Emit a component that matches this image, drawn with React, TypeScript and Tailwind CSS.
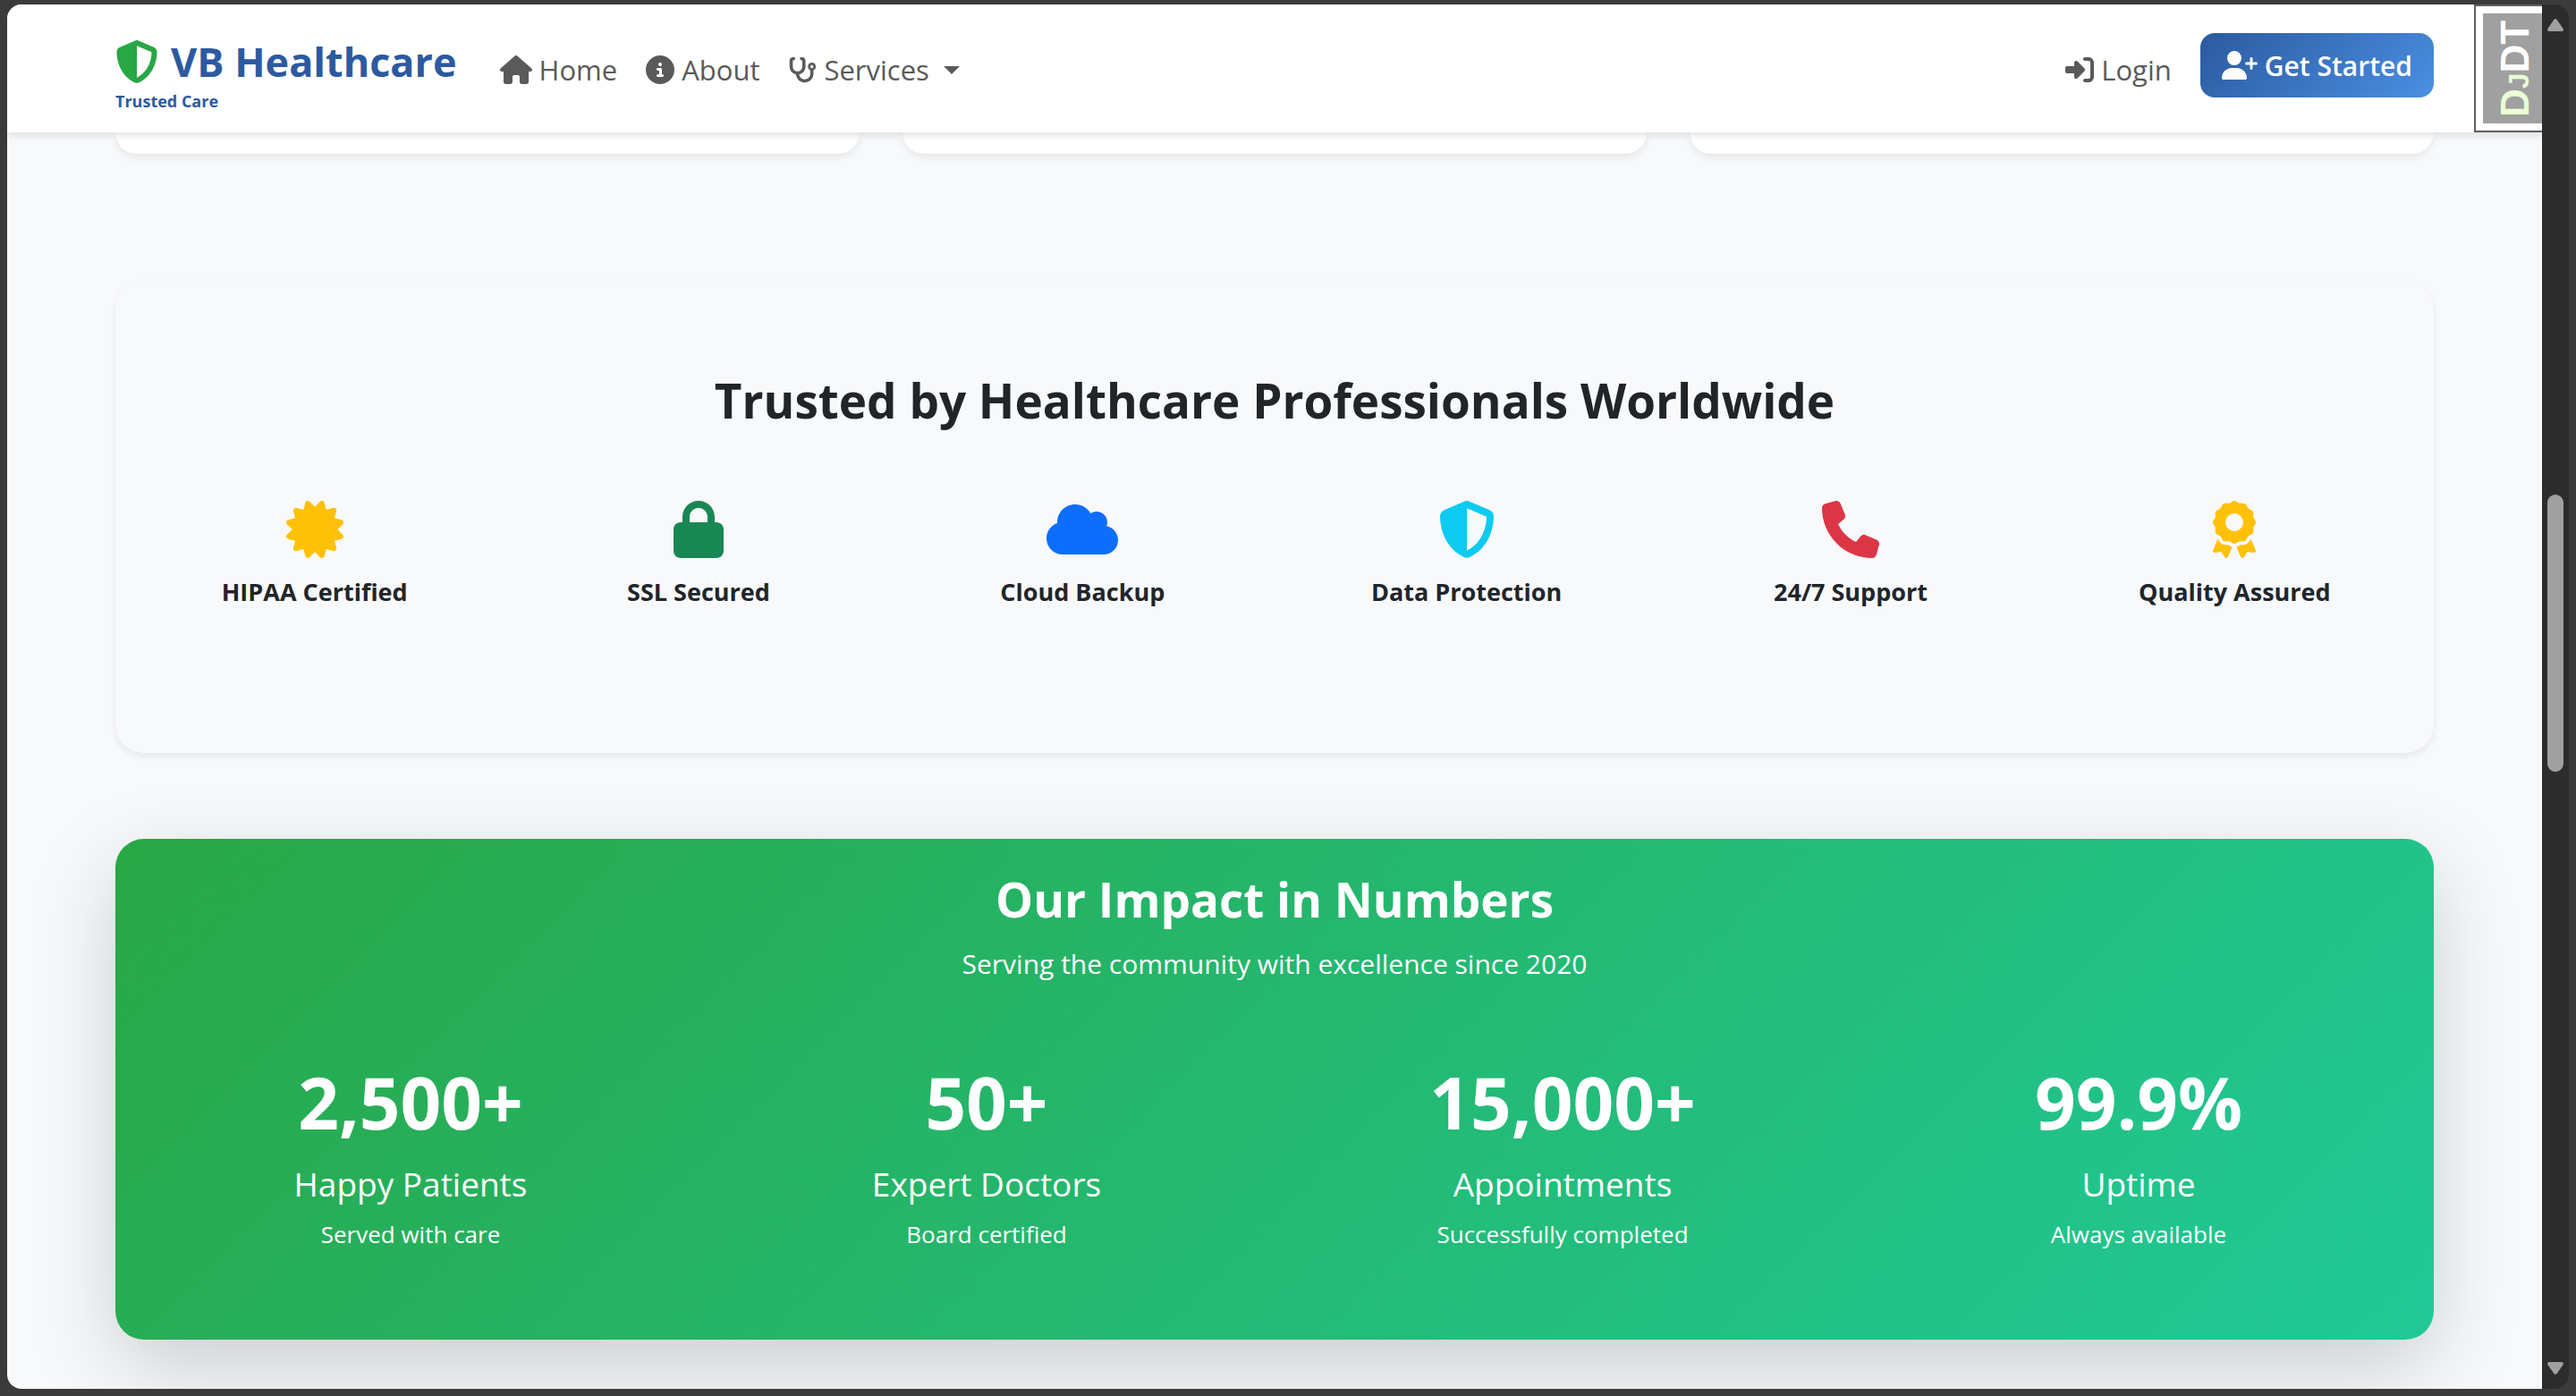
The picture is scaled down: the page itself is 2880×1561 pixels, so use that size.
import type { ComponentType, ReactNode } from "react";
import {
  FaAward,
  FaCertificate,
  FaCircleInfo,
  FaCloud,
  FaHouse,
  FaLock,
  FaPhone,
  FaRightToBracket,
  FaShieldHalved,
  FaStethoscope,
  FaUserPlus,
} from "react-icons/fa6";

type Icon = ComponentType<{ className?: string }>;

const badges: { icon: Icon; label: string; style: string }[] = [
  { icon: FaCertificate, label: "HIPAA Certified", style: "w-16 text-[#ffc107]" },
  { icon: FaLock, label: "SSL Secured", style: "w-14 text-[#198754]" },
  { icon: FaCloud, label: "Cloud Backup", style: "w-20 text-[#0d6efd]" },
  { icon: FaShieldHalved, label: "Data Protection", style: "w-16 text-[#0dcaf0]" },
  { icon: FaPhone, label: "24/7 Support", style: "w-16 text-[#dc3545]" },
  { icon: FaAward, label: "Quality Assured", style: "w-16 text-[#ffc107]" },
];

const stats = [
  { value: "2,500+", label: "Happy Patients", note: "Served with care" },
  { value: "50+", label: "Expert Doctors", note: "Board certified" },
  { value: "15,000+", label: "Appointments", note: "Successfully completed" },
  { value: "99.9%", label: "Uptime", note: "Always available" },
];

function NavLink({
  icon: IconShape,
  iconWidth = "w-8",
  children,
}: {
  icon: Icon;
  iconWidth?: string;
  children: ReactNode;
}) {
  return (
    <a href="#" className="flex items-center gap-2 text-[31px] leading-12 text-[#5a5a5a]">
      <IconShape className={`h-8 ${iconWidth}`} />
      {children}
    </a>
  );
}

function Header() {
  return (
    <header className="relative z-10 flex h-[143px] shrink-0 bg-white px-[121px] shadow-[0_4px_8px_rgba(0,0,0,0.1)]">
      <div className="flex flex-1 items-start">
        <a href="#" className="flex flex-col pt-8 font-bold text-[#2c5aa0]">
          <span className="flex items-center gap-3.5 text-[45px] leading-16">
            <FaShieldHalved className="h-12 w-12 text-[#28a745]" />
            VB Healthcare
          </span>
          <span className="text-[18px] leading-6">Trusted Care</span>
        </a>
        <nav className="ml-12 flex gap-8 pt-[49px]">
          <NavLink icon={FaHouse} iconWidth="w-9">
            Home
          </NavLink>
          <NavLink icon={FaCircleInfo}>About</NavLink>
          <button type="button" className="flex items-center gap-2 text-[31px] leading-12 text-[#5a5a5a]">
            <FaStethoscope className="h-8 w-8" />
            Services
            <svg viewBox="0 0 18 9" className="ml-2 w-[18px]" fill="currentColor">
              <path d="M0 0h18l-9 9z" />
            </svg>
          </button>
        </nav>
        <div className="ml-auto flex gap-8">
          <div className="pt-[49px]">
            <NavLink icon={FaRightToBracket}>Login</NavLink>
          </div>
          <button
            type="button"
            className="mt-8 flex h-18 items-center gap-2 rounded-2xl bg-linear-135 from-[#2c5aa0] to-[#4a90e2] px-6 text-[30px] font-semibold text-white"
          >
            <FaUserPlus className="h-8 w-10" />
            Get Started
          </button>
        </div>
      </div>
      <button
        type="button"
        aria-label="Show toolbar"
        className="absolute top-0 right-0 h-[143px] w-[76px] border-2 border-r-0 border-[#5f5f5f] bg-white py-2 pl-2"
      >
        <span className="flex h-full w-full items-center justify-center bg-[#a0a0a0] pl-1.5">
          <span className="shrink-0 -rotate-90 font-['Liberation_Sans',sans-serif] text-[44px] leading-none font-bold whitespace-nowrap text-white">
            <span className="text-[#eaffd5]">
              D<span className="text-[32px]">J</span>
            </span>
            DT
          </span>
        </span>
      </button>
    </header>
  );
}

function TrustSection() {
  return (
    <section className="mt-[142px] rounded-[32px] bg-[#f8f9fb] px-2 pt-[100px] pb-[158px] shadow-[0_4px_8px_rgba(0,0,0,0.075)]">
      <h2 className="text-center text-[53px] leading-[68px] font-bold text-[#212529]">
        Trusted by Healthcare Professionals Worldwide
      </h2>
      <ul className="mt-[78px] grid grid-cols-6">
        {badges.map(({ icon: IconShape, label, style }) => (
          <li key={label} className="flex flex-col items-center gap-4">
            <IconShape className={`h-16 ${style}`} />
            <span className="text-[27px] leading-11 font-bold text-[#212529]">{label}</span>
          </li>
        ))}
      </ul>
    </section>
  );
}

function ImpactSection() {
  return (
    <section className="mt-24 rounded-[32px] bg-linear-135 from-[#28a745] to-[#20c997] px-2 pt-8 pb-[94px] text-center text-white shadow-[0_32px_96px_rgba(0,0,0,0.175)]">
      <h2 className="text-[53px] leading-[72px] font-bold">Our Impact in Numbers</h2>
      <p className="mt-3 text-[30px] leading-12">Serving the community with excellence since 2020</p>
      <ul className="mt-20 grid grid-cols-4">
        {stats.map(({ value, label, note }) => (
          <li key={label}>
            <strong className="block text-[80px] leading-25 font-bold">{value}</strong>
            <span className="mt-[18px] block text-[37px] leading-12">{label}</span>
            <span className="mt-2 block text-[26px] leading-12">{note}</span>
          </li>
        ))}
      </ul>
    </section>
  );
}

function Scrollbar() {
  return (
    <div className="relative w-[30px] shrink-0 bg-[#2c2c2c] text-[#a0a0a0]">
      <div className="flex h-full flex-col items-center justify-between py-4">
        <svg viewBox="0 0 18 14" className="w-[18px]" fill="currentColor">
          <path d="M7.2 1.2Q9-1 10.8 1.2L17.6 11Q18.6 14 16 14H2Q-.6 14 .4 11z" />
        </svg>
        <svg viewBox="0 0 18 14" className="w-[18px] rotate-180" fill="currentColor">
          <path d="M7.2 1.2Q9-1 10.8 1.2L17.6 11Q18.6 14 16 14H2Q-.6 14 .4 11z" />
        </svg>
      </div>
      <div className="absolute top-[548px] left-1.5 h-[310px] w-[18px] rounded-full bg-[#a0a0a0]" />
    </div>
  );
}

export default function App() {
  return (
    <div className="h-screen bg-[#3b3b3b] px-2 pt-[5px] pb-2 font-['Open_Sans',sans-serif]">
      <div className="flex h-full overflow-hidden rounded-2xl">
        <div className="flex min-w-0 flex-1 flex-col overflow-hidden bg-[#f8f9fb]">
          <Header />
          <main className="px-[121px]">
            <div className="grid grid-cols-3 gap-12">
              {[0, 1, 2].map((card) => (
                <div key={card} className="h-6 rounded-b-[28px] bg-white shadow-[0_4px_8px_rgba(0,0,0,0.075)]" />
              ))}
            </div>
            <TrustSection />
            <ImpactSection />
          </main>
        </div>
        <Scrollbar />
      </div>
    </div>
  );
}
